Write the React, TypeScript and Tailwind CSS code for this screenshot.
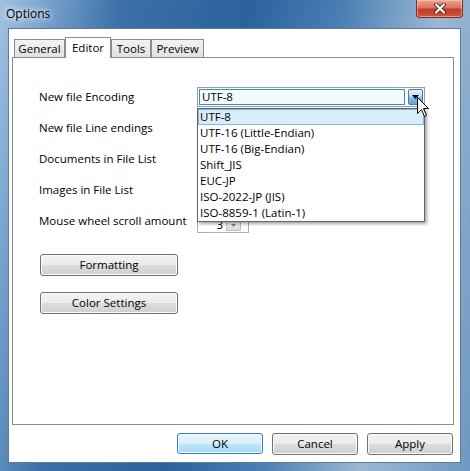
import React from "react";

const encodings = [
  "UTF-8",
  "UTF-16 (Little-Endian)",
  "UTF-16 (Big-Endian)",
  "Shift_JIS",
  "EUC-JP",
  "ISO-2022-JP (JIS)",
  "ISO-8859-1 (Latin-1)",
];

const labels = [
  "New file Encoding",
  "New file Line endings",
  "Documents in File List",
  "Images in File List",
  "Mouse wheel scroll amount",
];

const tabs = [
  { name: "General", w: "w-[51px]" },
  { name: "Editor", w: "w-[46px]", active: true },
  { name: "Tools", w: "w-[40px]" },
  { name: "Preview", w: "w-[53px]" },
];

const btn =
  "h-[22px] rounded-[3px] border border-[#707070] bg-[linear-gradient(#f2f2f2_0%,#ebebeb_50%,#dddddd_50%,#cfcfcf_100%)] shadow-[inset_0_0_0_1px_#fbfbfb] text-[11.5px] text-black";

function CloseGlyph() {
  return (
    <svg width="14" height="11" viewBox="0 0 14 11">
      <path d="M3 1.5 L11 9.5 M11 1.5 L3 9.5" stroke="#5a2019" strokeWidth="4" strokeLinecap="round" />
      <path d="M3 1.5 L11 9.5 M11 1.5 L3 9.5" stroke="#ffffff" strokeWidth="2.2" strokeLinecap="round" />
    </svg>
  );
}

function Cursor() {
  return (
    <svg width="13" height="21" viewBox="0 0 13 21" className="absolute left-[417px] top-[97px] z-30">
      <path
        d="M0.5 0.5 L0.5 16.5 L4.5 12.5 L7.5 19.5 L9.5 18.5 L6.5 11.5 L11.5 11.5 Z"
        fill="#ffffff"
        stroke="#000000"
        strokeWidth="1"
        strokeLinejoin="miter"
      />
    </svg>
  );
}

function EncodingCombo() {
  return (
    <div className="relative">
      <div className="flex h-[20px] w-[228px] border border-[#8aa3b8] bg-white p-px">
        <div className="flex flex-1 items-center border border-[#4e8aa0] bg-[#f3fafd] pl-[2px] text-[11.5px] text-black">
          UTF-8
        </div>
        <div className="ml-[3px] flex w-[15px] items-center justify-center rounded-[2px] border border-[#3c7fb1] bg-[linear-gradient(#e6f4fc_0%,#bfe1f6_45%,#7fbde6_55%,#5fa6d6_100%)]">
          <svg width="7" height="4" viewBox="0 0 7 4">
            <path d="M0 0 L7 0 L3.5 4 Z" fill="#000" />
          </svg>
        </div>
      </div>
      {/* open list */}
      <div className="absolute left-0 top-[21px] z-20 w-[228px] border border-[#646464] bg-white shadow-[2px_2px_3px_rgba(0,0,0,0.35)]">
        {encodings.map((e, i) => (
          <div
            key={e}
            className={
              i === 0
                ? "flex h-[16px] items-center border border-[#7fb7dc] bg-[#d7eefa] pl-[1px] text-[11.5px] text-black"
                : "flex h-[16px] items-center pl-[2px] text-[11.5px] text-black"
            }
          >
            {e}
          </div>
        ))}
      </div>
    </div>
  );
}

function ScrollAmount() {
  return (
    <div className="mt-[4px] flex h-[20px] w-[52px] items-end border border-[#abadb3] bg-white pb-px">
      <span className="w-[28px] pr-[3px] text-right text-[11.5px] leading-[13px] text-black">3</span>
      <div className="flex h-[10px] w-[15px] items-center justify-center border border-[#b8c4d0] bg-[linear-gradient(#f3f3f3,#dcdcdc)]">
        <svg width="5" height="3" viewBox="0 0 5 3">
          <path d="M0 0 L5 0 L2.5 3 Z" fill="#6b7f97" />
        </svg>
      </div>
    </div>
  );
}

export default function App() {
  return (
    <div className="relative flex h-[471px] w-[470px] flex-col overflow-hidden bg-[linear-gradient(100deg,#a3c2df_0%,#7aa4cf_8%,#3c70a7_22%,#2b629c_45%,#4a7eb4_62%,#9bb8d4_80%,#6e97c1_100%)] font-['Open_Sans',sans-serif]">
      {/* title bar */}
      <div className="flex h-[28px] items-start">
        <span className="pl-[6px] pt-[5px] text-[12px] text-black [text-shadow:0_0_6px_#ffffff,0_0_10px_#ffffff]">
          Options
        </span>
        <div className="ml-auto mr-[7px] flex h-[18px] w-[47px] items-center justify-center rounded-b-[4px] border border-t-0 border-[#7a2f26] bg-[linear-gradient(#eaa593_0%,#d9735f_45%,#c23a26_55%,#d2533a_100%)] shadow-[inset_0_0_0_1px_rgba(255,220,210,0.5)]">
          <CloseGlyph />
        </div>
      </div>

      {/* client area */}
      <div className="mb-[8px] ml-[8px] mr-[9px] flex flex-1 flex-col border border-[#5d7d9c] bg-white pl-[3px] pr-[6px] pt-[8px]">
        <div className="flex h-[20px] items-end pl-[2px]">
          {tabs.map((t) =>
            t.active ? (
              <div
                key={t.name}
                className={`relative z-10 -mb-px flex h-[21px] items-center justify-center border border-b-0 border-[#898c95] bg-white text-[11.5px] text-black ${t.w}`}
              >
                {t.name}
              </div>
            ) : (
              <div
                key={t.name}
                className={`flex h-[18px] items-center justify-center border border-b-0 border-[#898c95] bg-[linear-gradient(#f2f2f2,#e1e1e1)] text-[11.5px] text-black ${t.w}`}
              >
                {t.name}
              </div>
            )
          )}
        </div>

        {/* Editor page */}
        <div className="flex h-[368px] flex-col border border-[#898c95] bg-white pl-[26px] pt-[23px]">
          {labels.map((l, i) => (
            <div key={l} className="flex h-[31px] items-center">
              <span className="w-[158px] text-[11.5px] text-black">{l}</span>
              {i === 0 && <EncodingCombo />}
              {i === 4 && <ScrollAmount />}
            </div>
          ))}
          <button className={`${btn} ml-px mt-[18px] w-[138px]`}>Formatting</button>
          <button className={`${btn} ml-px mt-[16px] w-[138px]`}>Color Settings</button>
        </div>

        <div className="flex justify-end gap-[9px] pr-px pt-[8px]">
          <button className="h-[21px] w-[86px] rounded-[3px] border border-[#3c7fb1] bg-[linear-gradient(#eaf6fd_0%,#d9f0fc_50%,#bee6fd_50%,#a7d9f5_100%)] shadow-[inset_0_0_0_1px_#f2fbff] text-[11.5px] text-black">
            OK
          </button>
          <button className={`${btn} h-[21px] w-[86px]`}>Cancel</button>
          <button className={`${btn} h-[21px] w-[86px]`}>Apply</button>
        </div>
      </div>

      <Cursor />
    </div>
  );
}
